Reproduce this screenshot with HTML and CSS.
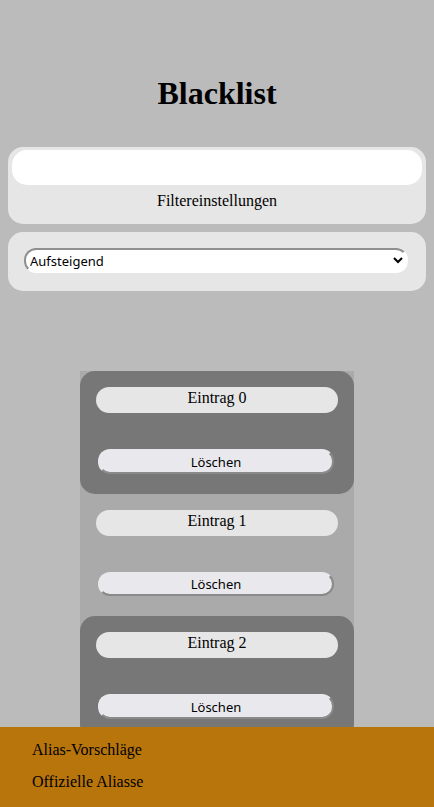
FILE: index.html
```html
<!DOCTYPE html>
<html lang="de">
<head>
<meta charset="utf-8">
<title>Blacklist</title>
<link rel="stylesheet" href="styles.css">
</head>
<body>
<main class="page">
  <h1 class="title">Blacklist</h1>
  <section class="panel filter-panel">
    <input class="search" type="text">
    <div class="filter-label">Filtereinstellungen</div>
  </section>
  <section class="panel sort-panel">
    <select class="sort">
      <option>Aufsteigend</option>
      <option>Absteigend</option>
    </select>
  </section>
  <div class="entries">
    <div class="entry dark">
      <div class="entry-name">Eintrag 0</div>
      <button class="delete">Löschen</button>
    </div>
    <div class="entry">
      <div class="entry-name">Eintrag 1</div>
      <button class="delete">Löschen</button>
    </div>
    <div class="entry dark">
      <div class="entry-name">Eintrag 2</div>
      <button class="delete">Löschen</button>
    </div>
  </div>
</main>
<nav class="footer">
  <div class="footer-link">Alias-Vorschläge</div>
  <div class="footer-link">Offizielle Aliasse</div>
</nav>
</body>
</html>
```
FILE: styles.css
```css
html, body {
  margin: 0;
  padding: 0;
}
body {
  background: #bbbbbb;
  font-family: "Liberation Serif", "Times New Roman", serif;
  font-size: 16px;
  color: #000;
}
.page {
  padding: 75px 8px 80px;
  display: flex;
  flex-direction: column;
  align-items: stretch;
}
.title {
  margin: 0 0 35px;
  font-size: 32px;
  font-weight: bold;
  text-align: center;
  line-height: 37px;
}
.panel {
  background: #e6e6e6;
  border-radius: 15px;
}
.filter-panel {
  padding: 3px 4px 14px;
  display: flex;
  flex-direction: column;
}
.search {
  height: 35px;
  box-sizing: border-box;
  border: none;
  border-radius: 15px;
  background: #fff;
  outline: none;
}
.filter-label {
  text-align: center;
  line-height: 19px;
  margin-top: 6px;
}
.sort-panel {
  margin-top: 8px;
  padding: 16px 18px 18px 16px;
}
.sort {
  width: 100%;
  height: 25px;
  box-sizing: border-box;
  border: 2px solid;
  border-color: #8f8f8f #ffffff #ffffff #8f8f8f;
  border-radius: 12px;
  background: #fff;
  font-family: "Noto Sans", "Open Sans", sans-serif;
  font-size: 13px;
  padding: 1px 0 0;
  color: #000;
}
.entries {
  margin: 80px auto 0;
  width: 274px;
  background: #aaaaaa;
}
.entry {
  padding: 16px 16px 20px;
  display: flex;
  flex-direction: column;
}
.entry.dark {
  background: #777777;
  border-radius: 15px;
}
.entry-name {
  height: 26px;
  line-height: 22px;
  background: #e6e6e6;
  border-radius: 13px;
  text-align: center;
  margin-bottom: 36px;
}
.delete {
  height: 24.5px;
  margin: 0 4px 0 2px;
  box-sizing: border-box;
  background: #e9e9ed;
  border: 2px solid;
  border-color: #e9e9ed #8a8a8a #8a8a8a #e9e9ed;
  border-radius: 12px;
  font-family: "Noto Sans", "Open Sans", sans-serif;
  font-size: 13px;
  color: #000;
  padding: 1px 0 0;
}
.footer {
  position: fixed;
  left: 0;
  right: 0;
  bottom: 0;
  height: 80px;
  box-sizing: border-box;
  background: #b8750c;
  padding: 14px 32px;
  display: flex;
  flex-direction: column;
  gap: 13.6px;
}
.footer-link {
  line-height: 18.4px;
}
```
